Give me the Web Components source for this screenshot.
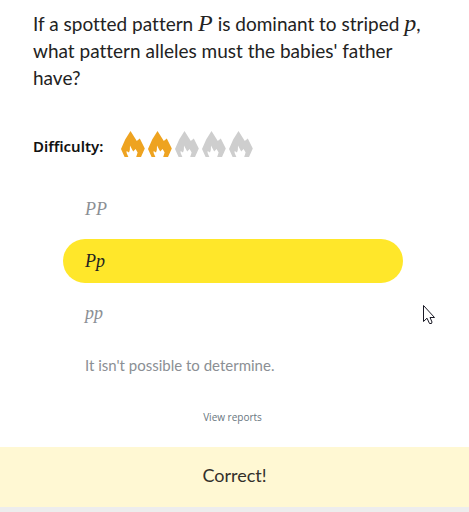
<!DOCTYPE html>
<html lang="en">
<head>
<meta charset="utf-8">
<title>Quiz question</title>
<style>
body { margin: 0; background: #fff; font-family: Lato, sans-serif; font-variant-ligatures: none; color: #222; }
</style>
</head>
<body>
<quiz-page></quiz-page>
<script>
const define = (name, html, setup) => customElements.define(name, class extends HTMLElement {
  connectedCallback() {
    if (this.shadowRoot) return;
    const root = this.attachShadow({ mode: "open" });
    root.innerHTML = html;
    if (setup) setup(this, root);
  }
});

define("math-var", `
<style>
:host { display: inline; font-family: "Liberation Serif", serif; font-style: italic; font-size: 24px; line-height: 1; }
:host([small]) { font-size: 18px; }
</style><slot></slot>`);

define("flame-icon", `
<style>
:host { display: block; width: 24px; height: 26px; color: #cecece; }
:host([lit]) { color: #eea320; }
svg { display: block; }
</style>
<svg width="24" height="26" viewBox="0 0 24 26" aria-hidden="true">
<path fill="currentColor" d="M9.5 0 L15.8 10 L18.8 7.5 L23.8 17.6 L20 26 H15.2 L16.6 21.6 L14.6 18 L12.2 20.4 L9 14.4 Q9.2 19 8 21.6 L5.6 20 L5.6 22 L7.4 26 H3.6 L0 18 L4.2 8.5 Z"/>
</svg>`);

define("difficulty-rating", `
<style>
:host { display: flex; align-items: center; gap: 18px; padding: 0 33px; }
.label { padding-top: 4px; font: 600 15px/22px "Noto Sans", sans-serif; color: #111; }
.flames { display: flex; gap: 3px; }
</style>
<span class="label">Difficulty:</span><div class="flames" role="img"></div>`, (host, root) => {
  const box = root.querySelector(".flames");
  const level = Number(host.getAttribute("level"));
  box.setAttribute("aria-label", level + " of 5");
  for (let i = 0; i < 5; i++) {
    const flame = document.createElement("flame-icon");
    if (i < level) flame.setAttribute("lit", "");
    box.append(flame);
  }
});

define("answer-option", `
<style>
:host { display: block; }
button { display: block; width: 100%; height: 44px; padding: 0 22px; border: 0; border-radius: 22px; background: none; color: #8b8f94; font: 15px/20px Lato, sans-serif; font-variant-ligatures: none; text-align: left; }
:host([selected]) button { background: #ffe72a; color: #222; }
</style>
<button type="button"><slot></slot></button>`);

define("result-banner", `
<style>
:host { display: block; padding: 14px 16px 18px; background: #fff8d3; border-bottom: 5px solid #ededed; text-align: center; font-size: 18px; line-height: 28px; color: #33302a; }
</style><slot></slot>`);

define("mouse-pointer", `
<style>
:host { position: absolute; left: 422px; top: 304px; pointer-events: none; }
svg { display: block; }
</style>
<svg width="14" height="22" viewBox="0 0 14 22" aria-hidden="true">
<path d="M1.5 1.5 V17.5 L5 14.2 L7.5 19.5 H9.5 L10 18 L8 13.5 H12.5 Z" fill="#fff" stroke="#181824"/>
</svg>`);

define("quiz-page", `
<style>
:host { display: flex; flex-direction: column; position: relative; min-height: 100vh; }
h1 { margin: 0; padding: 10px 33px 0; font-size: 19px; font-weight: 400; line-height: 27px; }
difficulty-rating { margin-top: 40px; }
.answers { display: flex; flex-direction: column; gap: 8px; padding: 30px 66px 0 63px; }
a { align-self: center; margin: 22px 4px 0 0; font: 10px/16px "Open Sans", sans-serif; color: #687680; text-decoration: none; }
result-banner { margin-top: auto; }
</style>
<h1><span>If a spotted pattern</span> <math-var>P</math-var> <span>is dominant to striped</span> <math-var>p</math-var><span>,</span> <span>what pattern alleles must the babies' father</span> <span>have?</span></h1>
<difficulty-rating level="2"></difficulty-rating>
<div class="answers">
<answer-option><math-var small>PP</math-var></answer-option>
<answer-option selected><math-var small>Pp</math-var></answer-option>
<answer-option><math-var small>pp</math-var></answer-option>
<answer-option>It isn't possible to determine.</answer-option>
</div>
<a href="#reports">View reports</a>
<result-banner>Correct!</result-banner>
<mouse-pointer></mouse-pointer>`);
</script>
</body>
</html>
